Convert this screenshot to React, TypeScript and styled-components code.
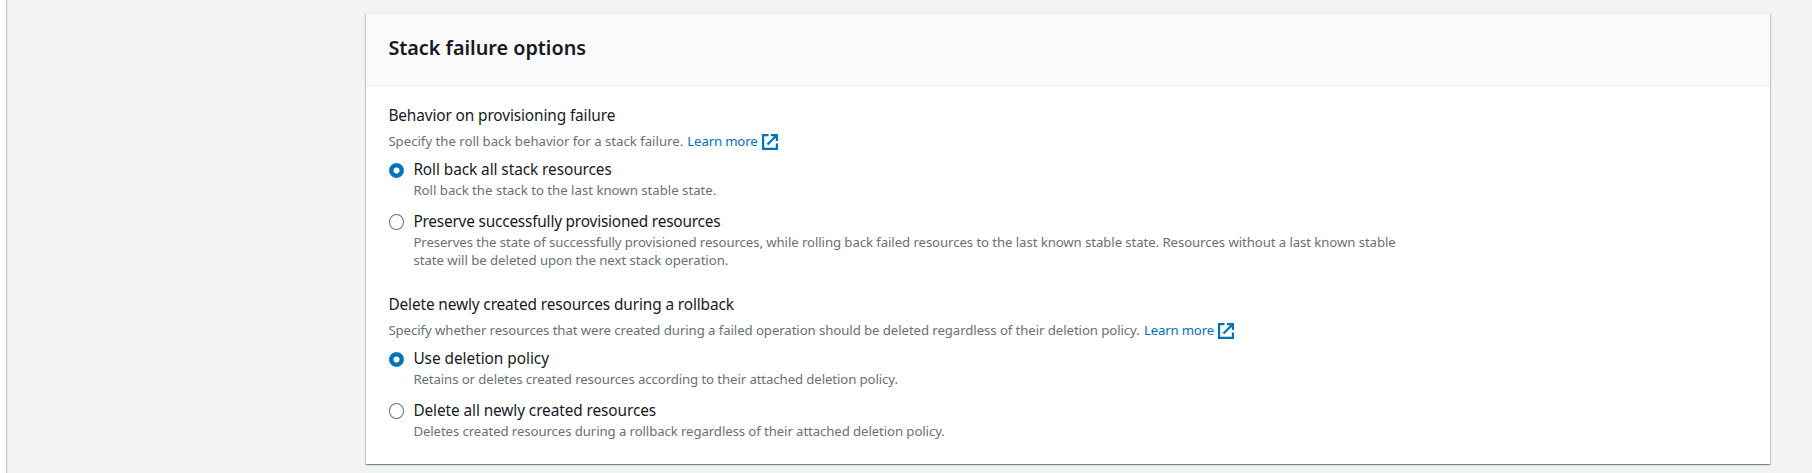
import React from "react";
import styled, { createGlobalStyle } from "styled-components";

const GlobalStyle = createGlobalStyle`
  * { box-sizing: border-box; }
  body {
    margin: 0;
    background: #fff;
    color: #16191f;
    font-family: "Noto Sans", "Open Sans", sans-serif;
  }
`;

const Page = styled.div`
  display: flex;
  height: 473px;
  padding-left: 6px;
  overflow: hidden;
`;

const Main = styled.main`
  flex: 1;
  border-left: 1px solid #c5cccc;
  background: #f2f3f3;
  box-shadow: inset 1px 0 0 #e6e9e9;
  padding: 13px 42px 0 359px;
`;

const Card = styled.section`
  height: 451px;
  background: #fff;
  box-shadow: 0 1px 1px 0 rgba(0, 28, 36, 0.3), 1px 1px 1px 0 rgba(0, 28, 36, 0.15),
    -1px 1px 1px 0 rgba(0, 28, 36, 0.15);
  border-top: 1px solid #eaeded;
`;

const Header = styled.header`
  height: 72px;
  padding: 21px 22.4px 0;
  background: #fafafa;
  border-bottom: 1px solid #eaeded;
`;

const Title = styled.h2`
  margin: 0;
  font-size: 19.8px;
  font-weight: 600;
  line-height: 26px;
  white-space: nowrap;
`;

const Body = styled.div`
  padding: 18px 22.4px 0;
`;

const Field = styled.section`
  height: 189px;
`;

const Label = styled.div<{ $track: number }>`
  height: 24px;
  font-size: 15.4px;
  line-height: 24px;
  white-space: nowrap;
  letter-spacing: ${(p) => p.$track}px;
`;

const Hint = styled.div`
  display: flex;
  height: 20px;
  margin: 3px 0 7px;
  font-size: 13.2px;
  line-height: 20px;
  color: #687078;
  white-space: nowrap;
`;

const Run = styled.span<{ $track: number }>`
  letter-spacing: ${(p) => p.$track}px;
`;

const Link = styled.a`
  display: flex;
  margin-left: 4.2px;
  color: #0073bb;
  text-decoration: none;
`;

const ExternalIcon = styled.svg`
  width: 16px;
  height: 16px;
  margin: 3px 0 0 4.4px;
  fill: none;
  stroke: currentColor;
  stroke-width: 2.2;
`;

const Option = styled.label`
  display: flex;
  min-height: 52px;
`;

const Radio = styled.span<{ $checked?: boolean }>`
  flex: none;
  width: 15px;
  height: ${(p) => (p.$checked ? 15 : 16)}px;
  margin: ${(p) => (p.$checked ? 5 : 4)}px 9.3px 0 0.7px;
  border: 1px solid ${(p) => (p.$checked ? "#0073bb" : "#687078")};
  border-radius: 50%;
  background: ${(p) => (p.$checked ? "radial-gradient(circle, #fff 2.7px, #0073bb 3.4px) border-box" : "#fff")};
`;

const OptionLabel = styled(Label)`
  height: 23px;
`;

const OptionText = styled.div<{ $track: number }>`
  font-size: 13.2px;
  line-height: 18px;
  color: #687078;
  white-space: nowrap;
  letter-spacing: ${(p) => p.$track}px;
`;

type Text = [string, number];
type OptionData = { label: Text; lines: Text[] };
type FieldData = { label: Text; hint: Text; options: OptionData[] };

const fields: FieldData[] = [
  {
    label: ["Behavior on provisioning failure", -0.12],
    hint: ["Specify the roll back behavior for a stack failure.", -0.01],
    options: [
      {
        label: ["Roll back all stack resources", -0.08],
        lines: [["Roll back the stack to the last known stable state.", 0]],
      },
      {
        label: ["Preserve successfully provisioned resources", -0.2],
        lines: [
          [
            "Preserves the state of successfully provisioned resources, while rolling back failed resources to the last known stable state. Resources without a last known stable",
            -0.08,
          ],
          ["state will be deleted upon the next stack operation.", -0.03],
        ],
      },
    ],
  },
  {
    label: ["Delete newly created resources during a rollback", -0.125],
    hint: [
      "Specify whether resources that were created during a failed operation should be deleted regardless of their deletion policy.",
      -0.073,
    ],
    options: [
      {
        label: ["Use deletion policy", -0.04],
        lines: [["Retains or deletes created resources according to their attached deletion policy.", -0.095]],
      },
      {
        label: ["Delete all newly created resources", -0.1],
        lines: [["Deletes created resources during a rollback regardless of their attached deletion policy.", -0.09]],
      },
    ],
  },
];

export default function App() {
  return (
    <>
      <GlobalStyle />
      <Page>
        <Main>
          <Card>
            <Header>
              <Title>Stack failure options</Title>
            </Header>
            <Body>
              {fields.map((field) => (
                <Field key={field.label[0]}>
                  <Label $track={field.label[1]}>{field.label[0]}</Label>
                  <Hint>
                    <Run $track={field.hint[1]}>{field.hint[0]}</Run>
                    <Link>
                      <Run $track={-0.16}>Learn more</Run>
                      <ExternalIcon viewBox="0 0 16 16">
                        <path d="M6.5 1.1H1.1v13.8h13.8V9.5M9 1.1h5.9V7M14.5 1.5 5.5 10.5" />
                        <path d="M10.5 1H15v4.5z" fill="currentColor" stroke="none" />
                      </ExternalIcon>
                    </Link>
                  </Hint>
                  {field.options.map((option, i) => (
                    <Option key={option.label[0]}>
                      <Radio $checked={i === 0} />
                      <div>
                        <OptionLabel $track={option.label[1]}>{option.label[0]}</OptionLabel>
                        {option.lines.map((line) => (
                          <OptionText key={line[0]} $track={line[1]}>
                            {line[0]}
                          </OptionText>
                        ))}
                      </div>
                    </Option>
                  ))}
                </Field>
              ))}
            </Body>
          </Card>
        </Main>
      </Page>
    </>
  );
}
